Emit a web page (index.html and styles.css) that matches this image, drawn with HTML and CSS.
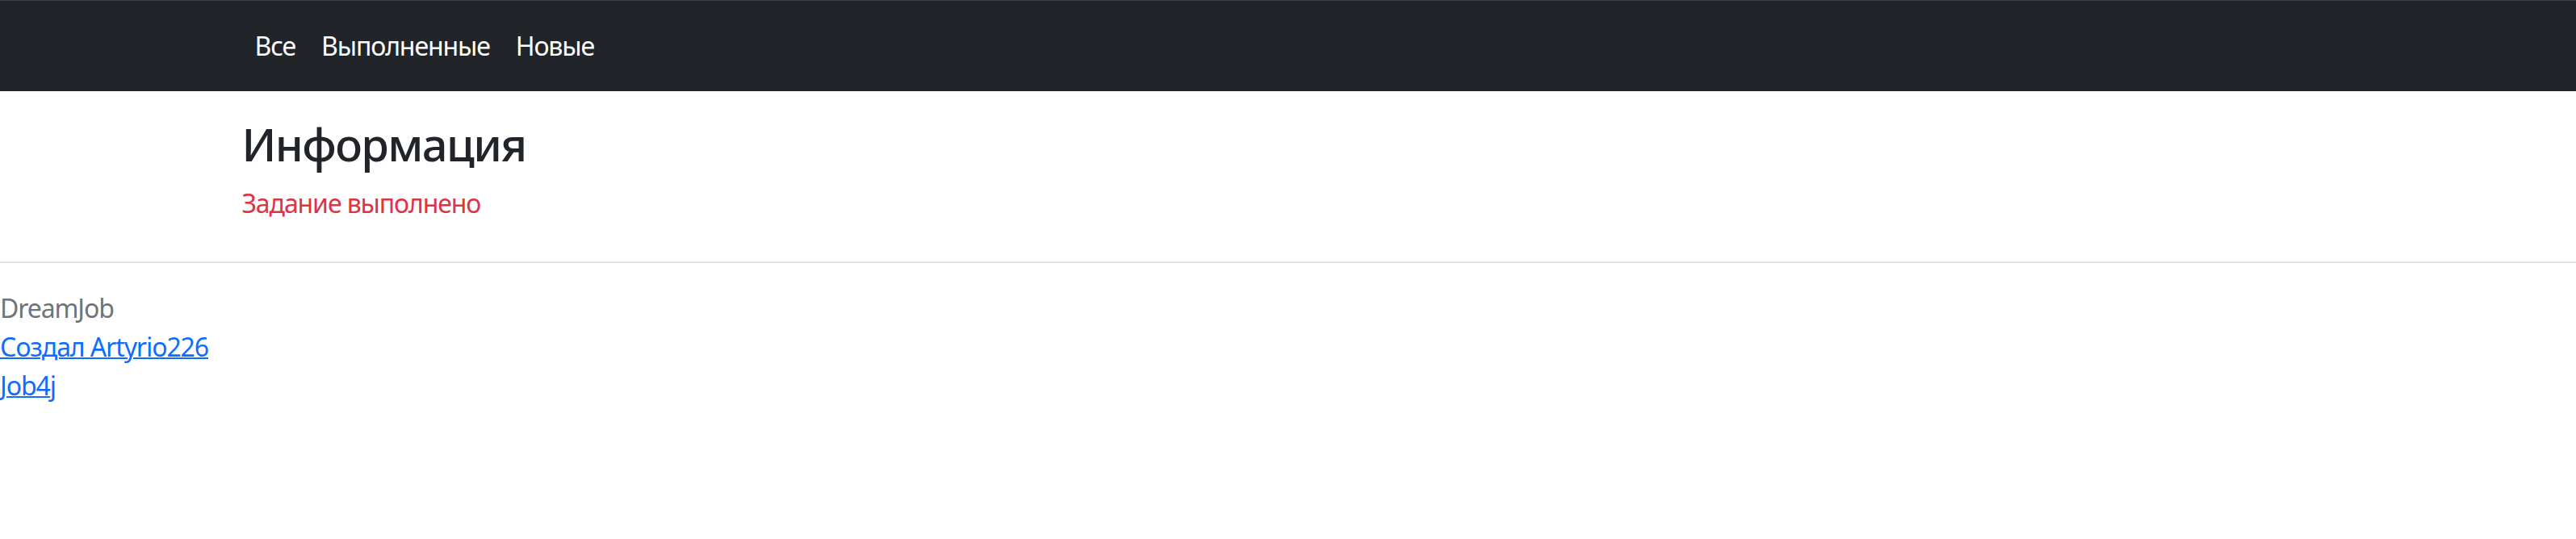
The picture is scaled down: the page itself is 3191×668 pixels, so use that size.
FILE: index.html
```html
<!DOCTYPE html>
<html lang="ru">
<head>
<meta charset="utf-8">
<title>Информация</title>
<link rel="stylesheet" href="styles.css">
</head>
<body>
<nav class="navbar">
  <div class="container nav-inner">
    <a class="nav-link" href="#">Все</a>
    <a class="nav-link" href="#">Выполненные</a>
    <a class="nav-link" href="#">Новые</a>
  </div>
</nav>
<main class="container main">
  <h3 class="title">Информация</h3>
  <p class="status">Задание выполнено</p>
</main>
<hr class="divider">
<footer class="footer">
  <div class="brand">DreamJob</div>
  <div><a class="flink" href="#">Создал Artyrio226</a></div>
  <div><a class="flink" href="#">Job4j</a></div>
</footer>
</body>
</html>
```

FILE: styles.css
```css
html, body {
  margin: 0;
  padding: 0;
  background: #fff;
}
body {
  font-family: "Noto Sans", "Open Sans", sans-serif;
  font-size: 32px;
  line-height: 48px;
  letter-spacing: -1.1px;
  color: #212529;
}
.container {
  width: 2640px;
  margin: 0 auto;
  padding: 0 24px;
  box-sizing: border-box;
}
.navbar {
  background: #212529;
  border-top: 1px solid #3c3f43;
  height: 112px;
  display: flex;
  align-items: center;
}
.nav-inner {
  display: flex;
  align-items: center;
}
.nav-link {
  color: #fff;
  text-decoration: none;
  padding: 16px 16px;
  line-height: 48px;
}
.main {
  padding-top: 32px;
}
.title {
  margin: 0 0 16px 0;
  font-size: 56px;
  font-weight: 500;
  line-height: 67px;
  letter-spacing: -1.6px;
}
.status {
  margin: 0;
  color: #dc3545;
}
.divider {
  margin: 48px 0 32px 0;
  border: 0;
  border-top: 2px solid #dee2e6;
}
.footer {
  padding: 0;
}
.brand {
  color: #6c757d;
}
.flink {
  color: #0d6efd;
  text-decoration: underline;
  text-decoration-thickness: 2px;
}
```
